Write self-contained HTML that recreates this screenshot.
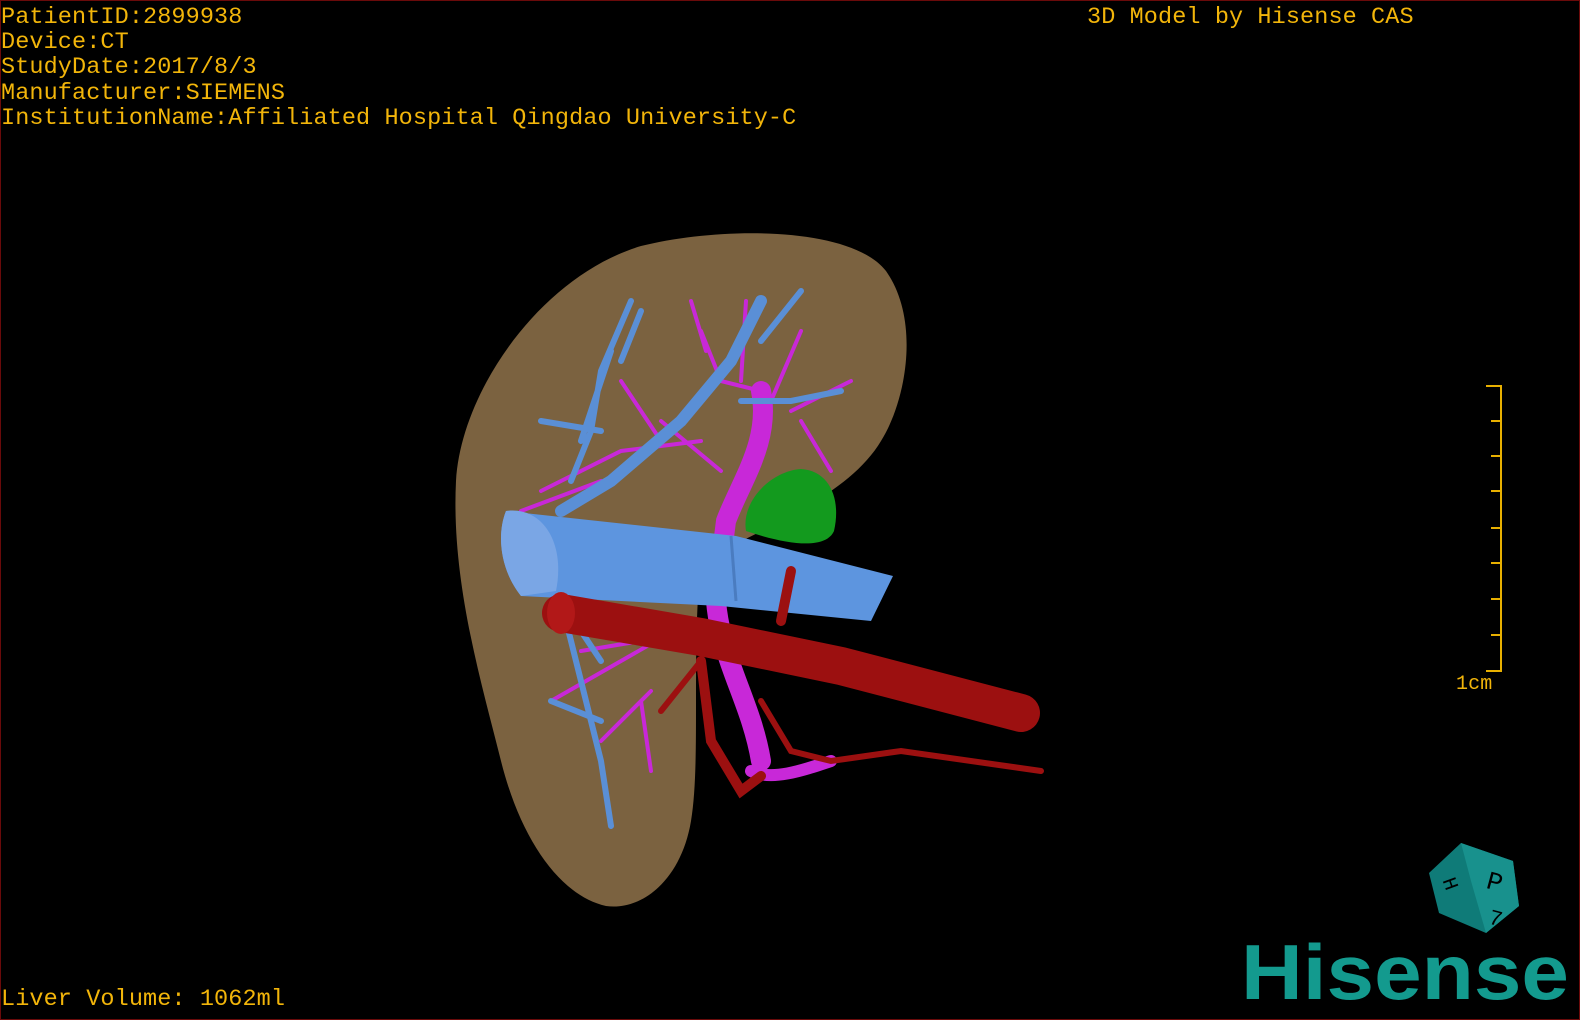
<!DOCTYPE html>
<html><head><meta charset="utf-8"><style>
html,body{margin:0;padding:0;background:#000;}
#f{position:relative;width:1578px;height:1018px;border:1px solid #6a0a0a;background:#000;overflow:hidden;}
.t{position:absolute;color:#f2b50a;font-family:"Liberation Mono",monospace;font-size:23.5px;line-height:25.2px;white-space:pre;letter-spacing:0.1px;}
</style></head><body><div id="f">
<div class="t" style="left:0;top:4px">PatientID:2899938
Device:CT
StudyDate:2017/8/3
Manufacturer:SIEMENS
InstitutionName:Affiliated Hospital Qingdao University-C</div>
<div class="t" style="left:1086px;top:4px">3D Model by Hisense CAS</div>
<div class="t" style="left:0;top:986px">Liver Volume: 1062ml</div>
<div class="t" style="left:1455px;top:671px;font-size:20px">1cm</div>
<svg width="1580" height="1020" style="position:absolute;left:0;top:0">
<g stroke="#e8b000" stroke-width="2" fill="none">
<path d="M1485 385 H1500 V670 H1485"/>
<path d="M1490 420H1500M1490 455H1500M1490 490H1500M1490 527H1500M1490 562H1500M1490 598H1500M1490 634H1500"/>
</g>
<path d="M640 245 C720 225 850 225 885 270 C920 320 905 400 880 440 C850 490 780 520 700 560 C690 650 700 760 690 820 C680 880 640 910 605 905 C560 895 520 840 500 760 C480 680 450 580 455 480 C460 390 540 275 640 245 Z" fill="#7b6240"/>
<g stroke="#c828d8" stroke-linecap="round" fill="none">
<path d="M760 390 C770 440 740 480 725 520 L715 600 C720 660 750 700 760 760" stroke-width="20"/>
<path d="M700 330 L720 380 L760 390 M690 300 L705 350 M745 300 L740 380 M800 330 L770 400 M850 380 L790 410 M540 490 L620 450 L700 440 M520 510 L600 480 M620 380 L660 440 M660 420 L720 470 M550 700 L620 660 L690 620 M650 770 L640 700 M600 740 L650 690 M580 650 L640 640 M800 420 L830 470" stroke-width="4"/>
<path d="M750 770 C770 780 800 770 830 760" stroke-width="12"/>
</g>
<g stroke="#5a8fd6" stroke-linecap="round" fill="none">
<path d="M760 300 L730 360 L680 420 L610 480 L560 510" stroke-width="12"/>
<path d="M800 290 L760 340 M840 390 L790 400 L740 400 M630 300 L600 370 L590 430 L570 480 M610 350 L580 440 M640 310 L620 360 M540 420 L600 430 M560 600 L580 680 L600 760 L610 825 M550 700 L600 720 M580 630 L600 660" stroke-width="6"/>
</g>
<path d="M745 530 C740 500 770 470 800 468 C830 470 840 500 833 530 C825 548 790 545 745 530 Z" fill="#139a1e"/>
<path d="M505 510 L735 535 L892 575 L870 620 L720 605 L520 595 C500 570 495 535 505 510 Z" fill="#5d95df"/>
<path d="M505 510 C540 505 565 540 555 590 L520 595 C500 570 495 535 505 510 Z" fill="#7aa6e5"/>
<path d="M730 535 L735 600" stroke="#4a7cc0" stroke-width="3"/>
<g stroke="#9c1010" stroke-linecap="round" fill="none">
<path d="M560 612 L700 636 L840 665 L1020 712" stroke-width="38"/>
<path d="M790 570 L780 620" stroke-width="10"/>
<path d="M700 660 L710 740 L740 790 L760 775" stroke-width="10"/>
<path d="M700 660 L660 710" stroke-width="6"/>
<path d="M760 700 L790 750 L830 760 L900 750 L1040 770" stroke-width="6"/>
</g>
<ellipse cx="560" cy="612" rx="14" ry="21" fill="#b21818"/>
<g>
<path d="M1428 872 L1460 842 L1512 860 L1518 905 L1485 932 L1438 912 Z" fill="#0f7b78"/>
<path d="M1460 842 L1512 860 L1518 905 L1485 932 L1470 880 Z" fill="#18918d"/>
<text x="1486" y="888" font-family="Liberation Mono,monospace" font-size="26" fill="#000" transform="rotate(15 1490 880)">P</text>
<text x="1490" y="924" font-family="Liberation Mono,monospace" font-size="22" fill="#000" transform="rotate(15 1495 910)">7</text>
<text x="1443" y="893" font-family="Liberation Mono,monospace" font-size="20" fill="#000" transform="rotate(70 1452 885)">H</text>
</g>
<text x="1240" y="998" font-family="Liberation Sans,sans-serif" font-weight="bold" font-size="78" fill="#139a8e" textLength="328" lengthAdjust="spacingAndGlyphs">Hisense</text>
</svg>
</div></body></html>
